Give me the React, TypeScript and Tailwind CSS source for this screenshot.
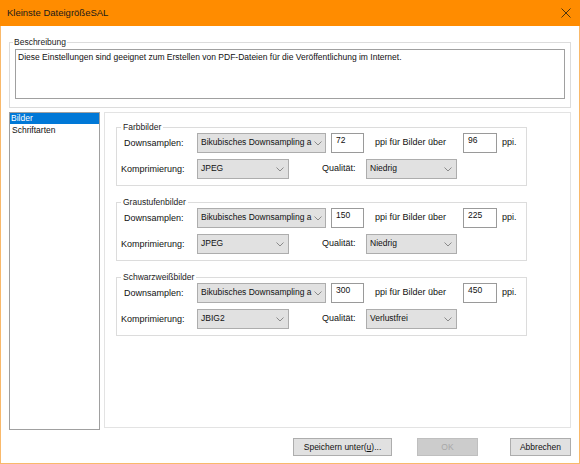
import React from 'react';

// kleines Dropdown-Feld im Stil der Windows-Combobox
const Combo = ({ value, width }: { value: string; width: string }) => (
  <div className={`${width} h-[20px] flex items-center justify-between bg-[#e1e1e1] border border-[#adadad] pl-[3px] pr-[4px] text-[8.5px] leading-[10px] text-[#111]`}>
    <span className="whitespace-nowrap -mt-[3px]">{value}</span>
    <svg width="8" height="5" viewBox="0 0 8 5" className="shrink-0 ml-[2px]">
      <polyline points="0.5,0.5 4,4 7.5,0.5" fill="none" stroke="#8a8a8a" strokeWidth="1" />
    </svg>
  </div>
);

const NumberBox = ({ value, width }: { value: string; width: string }) => (
  <div className={`${width} h-[20px] bg-white border border-[#9a9a9a] pl-[4px] pt-[1px] text-[8.5px] leading-[10px] text-[#111]`}>
    {value}
  </div>
);

const Group = ({
  title,
  first,
  res,
  res2,
  comp,
  qual,
}: {
  title: string;
  first?: boolean;
  res: string;
  res2: string;
  comp: string;
  qual: string;
}) => (
  <div className={`relative w-[411px] border border-[#dcdcdc] pt-[5px] pb-[6px] ${first ? '' : 'mt-[16px]'}`}>
    <span className="absolute -top-[6px] left-[4px] bg-white px-[2px] text-[8.5px] leading-[11px] text-[#222]">{title}</span>
    <div className="flex items-center h-[20px]">
      <span className="w-[80px] pl-[7px] pt-[2px] text-[9px] text-[#111]">Downsamplen:</span>
      <Combo value="Bikubisches Downsampling a" width="w-[129px]" />
      <div className="ml-[5px]">
        <NumberBox value={res} width="w-[33px]" />
      </div>
      <span className="w-[99px] pl-[11px] text-[9px] text-[#111] whitespace-nowrap">ppi für Bilder über</span>
      <NumberBox value={res2} width="w-[34px]" />
      <span className="ml-[5px] text-[9px] text-[#111]">ppi.</span>
    </div>
    <div className="flex items-center h-[20px] mt-[6px]">
      <span className="w-[80px] pl-[4px] pt-[1px] text-[9px] text-[#111]">Komprimierung:</span>
      <Combo value={comp} width="w-[92px]" />
      <span className="w-[77px] pl-[33px] text-[9px] text-[#111]">Qualität:</span>
      <Combo value={qual} width="w-[91px]" />
    </div>
  </div>
);

export default function App() {
  return (
    <div className="w-[580px] h-[464px] flex flex-col bg-white font-['Liberation_Sans',Arial,sans-serif] text-black">
      {/* Titelleiste */}
      <div className="h-[26px] shrink-0 bg-[#ff8c00] flex items-center justify-between pl-[7px] pr-[9px]">
        <span className="text-[9.5px] text-[#1a1a1a]">Kleinste DateigrößeSAL</span>
        <svg width="10" height="10" viewBox="0 0 10 10">
          <path d="M0.5 0.5 L9.5 9.5 M9.5 0.5 L0.5 9.5" stroke="#3a2a10" strokeWidth="0.9" />
        </svg>
      </div>

      <div className="flex-1 flex flex-col border-x border-b border-[#f9b96b] px-[8px] pt-[16px]">
        {/* Beschreibung */}
        <div className="relative border border-[#dcdcdc] pt-[6px] pb-[8px] px-[5px]">
          <span className="absolute -top-[6px] left-[3px] bg-white px-[1px] text-[8.5px] leading-[11px] text-[#222]">Beschreibung</span>
          <div className="h-[50px] border border-[#a0a0a0] bg-white pl-[2px] pt-[2px] text-[8.5px] leading-[11px] text-[#111]">
            Diese Einstellungen sind geeignet zum Erstellen von PDF-Dateien für die Veröffentlichung im Internet.
          </div>
        </div>

        <div className="flex mt-[4px]">
          {/* Liste */}
          <div className="w-[91px] h-[318px] border border-[#a0a0a0] bg-white text-[8.5px] leading-[12px]">
            <div className="h-[11px] leading-[11px] bg-[#0078d7] text-white pl-[1px]">Bilder</div>
            <div className="pl-[2px] text-[#111]">Schriftarten</div>
          </div>

          {/* Einstellungen */}
          <div className="ml-[4px] flex-1 h-[316px] border border-[#e3e3e3] pt-[14px] pl-[11px]">
            <Group title="Farbbilder" first res="72" res2="96" comp="JPEG" qual="Niedrig" />
            <Group title="Graustufenbilder" res="150" res2="225" comp="JPEG" qual="Niedrig" />
            <Group title="Schwarzweißbilder" res="300" res2="450" comp="JBIG2" qual="Verlustfrei" />
          </div>
        </div>

        {/* Schaltflächen */}
        <div className="flex justify-end mt-[8px] text-[8.5px]">
          <button className="w-[99px] h-[18px] bg-[#e1e1e1] border border-[#adadad] text-[#111]">
            Speichern unter(<span className="underline">u</span>)...
          </button>
          <button className="ml-[25px] w-[61px] h-[18px] bg-[#cccccc] border border-[#bfbfbf] text-[#a8a8a8]">OK</button>
          <button className="ml-[32px] w-[61px] h-[18px] bg-[#e1e1e1] border border-[#adadad] text-[#111]">Abbrechen</button>
        </div>
      </div>
    </div>
  );
}
